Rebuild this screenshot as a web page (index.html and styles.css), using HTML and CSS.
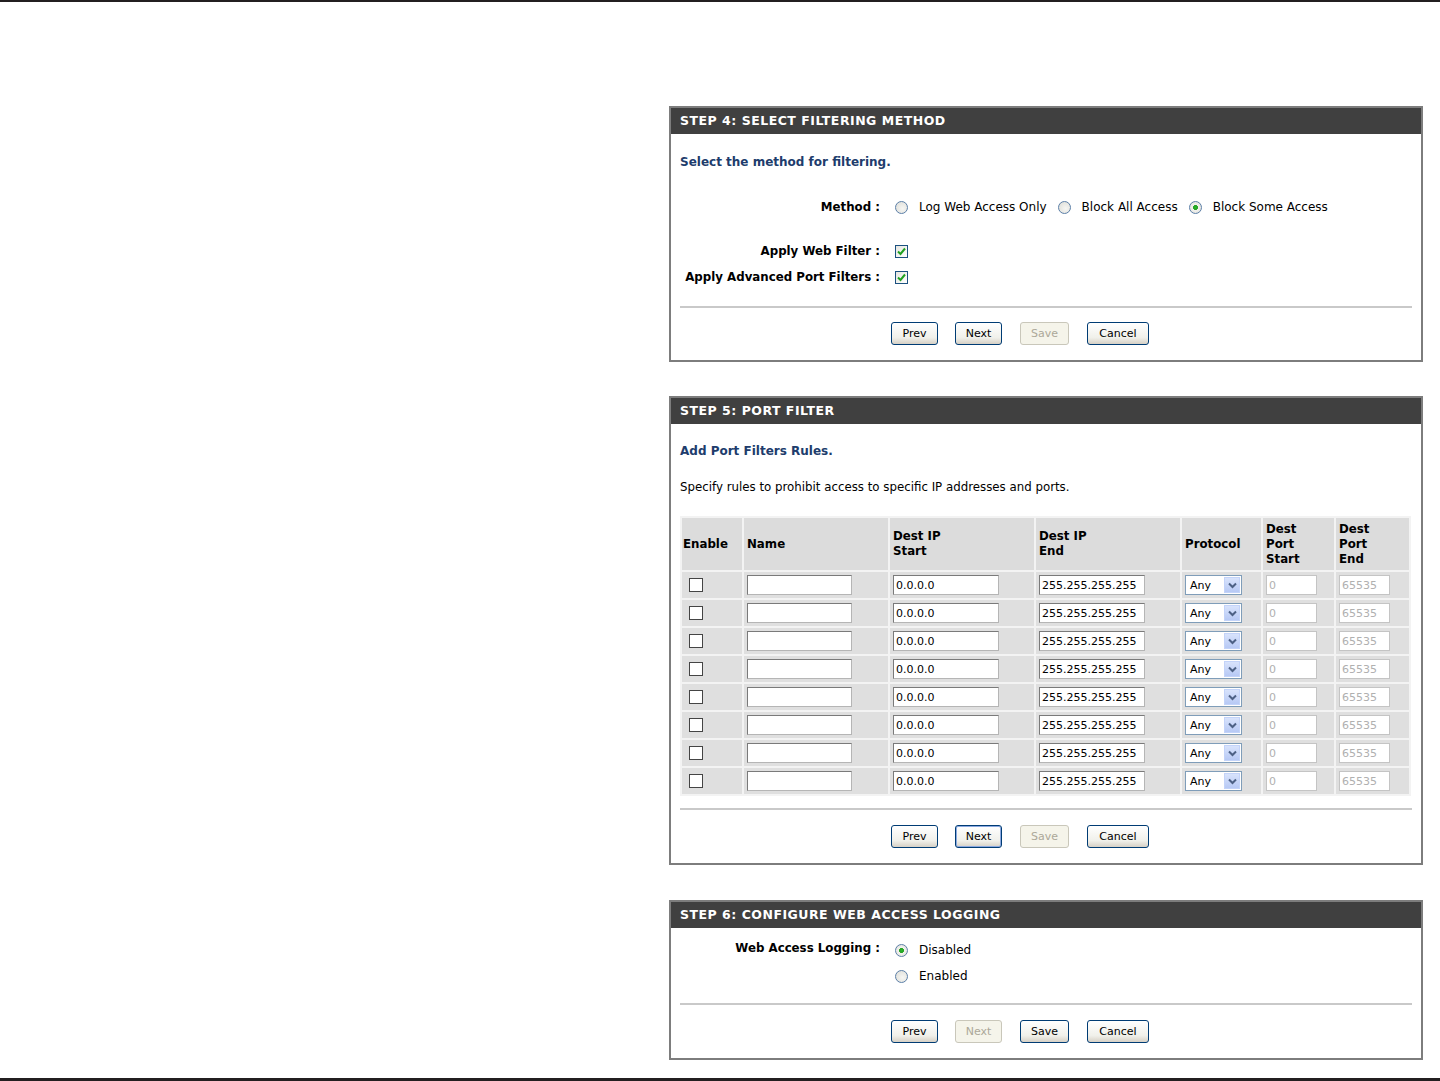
FILE: index.html
```html
<!DOCTYPE html>
<html lang="en">
<head>
	<meta charset="UTF-8">
	<title>Access Control Wizard</title>
	<meta name="viewport" content="width=device-width">
	<link rel="stylesheet" href="styles.css">
</head>
<body>
	<div class="page">
		<div class="wizard">

			<!-- passo 4 -->
			<div class="box step4">
				<div class="head">STEP 4: SELECT FILTERING METHOD</div>
				<div class="content">
					<div class="intro">Select the method for filtering.</div>
					<div class="field method">
						<label class="name">Method :</label>
						<div class="value">
							<label class="opt"><input type="radio" name="method"> Log Web Access Only</label>
							<label class="opt"><input type="radio" name="method"> Block All Access</label>
							<label class="opt"><input type="radio" name="method" checked> Block Some Access</label>
						</div>
					</div>
					<div class="field webfilter">
						<label class="name">Apply Web Filter :</label>
						<div class="value"><span class="check on"><svg width="11" height="11" viewBox="0 0 11 11"><path d="M2 5.5 L4.5 8 L9 2.5" fill="none" stroke="#21a121" stroke-width="2"/></svg></span></div>
					</div>
					<div class="field portfilter">
						<label class="name">Apply Advanced Port Filters :</label>
						<div class="value"><span class="check on"><svg width="11" height="11" viewBox="0 0 11 11"><path d="M2 5.5 L4.5 8 L9 2.5" fill="none" stroke="#21a121" stroke-width="2"/></svg></span></div>
					</div>
					<hr>
					<div class="buttons">
						<button class="btn">Prev</button>
						<button class="btn">Next</button>
						<button class="btn save" disabled>Save</button>
						<button class="btn cancel">Cancel</button>
					</div>
				</div>
			</div>

			<!-- passo 5 -->
			<div class="box step5">
				<div class="head">STEP 5: PORT FILTER</div>
				<div class="content">
					<div class="intro">Add Port Filters Rules.</div>
					<div class="desc">Specify rules to prohibit access to specific IP addresses and ports.</div>
					<table class="rules">
						<colgroup>
							<col style="width:60px"><col style="width:144px"><col style="width:144px"><col style="width:144px"><col style="width:79px"><col style="width:71px"><col style="width:73px">
						</colgroup>
						<thead>
							<tr>
								<th class="first">Enable</th>
								<th>Name</th>
								<th>Dest IP<br>Start</th>
								<th>Dest IP<br>End</th>
								<th>Protocol</th>
								<th>Dest<br>Port<br>Start</th>
								<th>Dest<br>Port<br>End</th>
							</tr>
						</thead>
						<tbody id="rows"></tbody>
					</table>
					<hr>
					<div class="buttons">
						<button class="btn">Prev</button>
						<button class="btn focus">Next</button>
						<button class="btn save" disabled>Save</button>
						<button class="btn cancel">Cancel</button>
					</div>
				</div>
			</div>

			<!-- passo 6 -->
			<div class="box step6">
				<div class="head">STEP 6: CONFIGURE WEB ACCESS LOGGING</div>
				<div class="content">
					<div class="field logging">
						<label class="name">Web Access Logging :</label>
						<div class="value stack">
							<label class="opt"><input type="radio" name="logging" checked> Disabled</label>
							<label class="opt"><input type="radio" name="logging"> Enabled</label>
						</div>
					</div>
					<hr>
					<div class="buttons">
						<button class="btn">Prev</button>
						<button class="btn" disabled>Next</button>
						<button class="btn save">Save</button>
						<button class="btn cancel">Cancel</button>
					</div>
				</div>
			</div>

		</div>
	</div>

	<script>
		// monta as 8 linhas da tabela de regras
		var tbody = document.getElementById('rows');
		var html = '';
		for(var i = 0; i < 8; i++) {
			html += '<tr>' +
				'<td><span class="check"></span></td>' +
				'<td><input type="text" class="txt name-field"></td>' +
				'<td><input type="text" class="txt ip" value="0.0.0.0"></td>' +
				'<td><input type="text" class="txt ip" value="255.255.255.255"></td>' +
				'<td><span class="select"><span class="sel-val">Any</span><span class="sel-arrow"><svg width="9" height="7" viewBox="0 0 9 7"><path d="M1 1.5 L4.5 5 L8 1.5" fill="none" stroke="#4d6185" stroke-width="2"/></svg></span></span></td>' +
				'<td><input type="text" class="txt port" value="0" disabled></td>' +
				'<td><input type="text" class="txt port" value="65535" disabled></td>' +
				'</tr>';
		}
		tbody.innerHTML = html;
	</script>
</body>
</html>
```

FILE: styles.css
```css
* {
	padding: 0;
	margin: 0;
	box-sizing: border-box;
}

body {
	font-family: "DejaVu Sans", sans-serif;
	font-size: 12px;
	color: #000;
	background: #fff;
}

.page {
	height: 1081px;
	border-top: 2px solid #231f20;
	border-bottom: 3px solid #231f20;
	padding: 104px 0 0 669px;
}

.wizard {
	width: 754px;
	display: flex;
	flex-direction: column;
	gap: 34px;
}

.step6 {
	margin-top: 1px;
}

.box {
	border: 2px solid #7d7d7d;
	background: #fff;
}

.head {
	height: 26px;
	line-height: 26px;
	background: #404040;
	color: #fff;
	font-weight: bold;
	font-size: 12.5px;
	letter-spacing: 0.5px;
	padding-left: 9px;
}

.content {
	padding: 0 9px 15px 9px;
}

.intro {
	margin-top: 20px;
	line-height: 16px;
	font-weight: bold;
	color: #203c6c;
	font-size: 12px;
}

.step5 .intro {
	margin-top: 19px;
}

.desc {
	margin-top: 20px;
	line-height: 16px;
	font-size: 11.8px;
}

.field {
	display: grid;
	grid-template-columns: 200px 1fr;
	column-gap: 15px;
	align-items: center;
	min-height: 20px;
}

.field .name {
	text-align: right;
	font-weight: bold;
	font-size: 11.8px;
}

.method {
	margin-top: 27px;
}

.webfilter {
	margin-top: 24px;
}

.portfilter {
	margin-top: 6px;
}

.logging {
	margin-top: 12px;
	align-items: start;
}

.logging .name {
	line-height: 16px;
}

.value {
	display: flex;
	align-items: center;
}

.value.stack {
	flex-direction: column;
	align-items: flex-start;
	gap: 6px;
}

.opt {
	display: inline-flex;
	align-items: center;
	gap: 11px;
	margin-right: 11px;
	height: 20px;
}

.opt input[type="radio"] {
	-webkit-appearance: none;
	appearance: none;
	width: 13px;
	height: 13px;
	border: 1px solid #5c7fa8;
	border-radius: 50%;
	background: radial-gradient(circle at 60% 60%, #f6f6f3 0%, #dcdcd6 100%);
	margin: 0;
}

.opt input[type="radio"]:checked {
	background: radial-gradient(circle, #2bb52b 0, #21a121 2.2px, #f3f3ef 2.6px, #dcdcd6 100%);
}

.check {
	display: inline-block;
	width: 13px;
	height: 13px;
	border: 1px solid #3c3c3c;
	background: #fff;
	vertical-align: middle;
}

.check.on {
	border-color: #1c5180;
	background: linear-gradient(135deg, #e6e6e0, #fff);
}

.check svg {
	display: block;
}

hr {
	border: 0;
	height: 2px;
	background: #c9c9c9;
}

.step4 hr {
	margin-top: 19px;
}

.step5 hr {
	margin-top: 12px;
}

.step6 hr {
	margin-top: 17px;
}

.buttons {
	margin-top: 15px;
	padding-left: 211px;
	display: flex;
	gap: 17px;
}

.step4 .buttons {
	margin-top: 14px;
}

.btn {
	height: 23px;
	width: 47px;
	font-family: "DejaVu Sans", sans-serif;
	font-size: 11px;
	color: #000;
	border: 1px solid #003c74;
	border-radius: 3px;
	background: linear-gradient(#ffffff, #f0f0ea 70%, #d6d0c5);
}

.btn.save {
	width: 49px;
	margin-left: 1px;
}

.btn.cancel {
	width: 62px;
	margin-left: 1px;
}

.btn.focus {
	box-shadow: inset 0 0 0 1px #8aa8e0;
}

.btn:disabled {
	color: #aca899;
	border-color: #c9c7ba;
	background: #f5f4ea;
}

/* tabela de regras */

.rules {
	margin-top: 21px;
	width: 731px;
	table-layout: fixed;
	border-collapse: separate;
	border-spacing: 2px;
	background: #f3f3f3;
}

.rules th {
	height: 52px;
	background: #dcdcdc;
	text-align: left;
	font-weight: bold;
	font-size: 11.8px;
	line-height: 15px;
	padding: 0 3px;
	vertical-align: middle;
}

.rules th.first {
	padding-left: 1px;
}

.rules td {
	height: 26px;
	background: #dfdfdf;
	padding: 0 3px;
	vertical-align: middle;
}

.rules td:first-child .check {
	margin-left: 4px;
	border-color: #444;
	width: 14px;
	height: 14px;
}

.txt {
	display: block;
	height: 20px;
	border: 1px solid #7a7a7a;
	border-right-color: #b5b5b5;
	border-bottom-color: #b5b5b5;
	font-family: "DejaVu Sans", sans-serif;
	font-size: 11px;
	padding: 0 2px;
	color: #000;
	background: #fff;
}

.name-field {
	width: 105px;
}

.ip {
	width: 106px;
}

.port {
	width: 51px;
}

.port:disabled {
	color: #b0b0b0;
	border-color: #c4c4c4;
	background: #fff;
}

.select {
	display: flex;
	align-items: center;
	justify-content: space-between;
	width: 57px;
	height: 20px;
	border: 1px solid #7f9db9;
	background: #fff;
	padding: 0 1px 0 4px;
	font-size: 11px;
}

.sel-arrow {
	width: 16px;
	height: 16px;
	background: linear-gradient(#d8e3fc, #b7c9f5);
	border: 1px solid #c3d3f9;
	display: flex;
	align-items: center;
	justify-content: center;
}
```
